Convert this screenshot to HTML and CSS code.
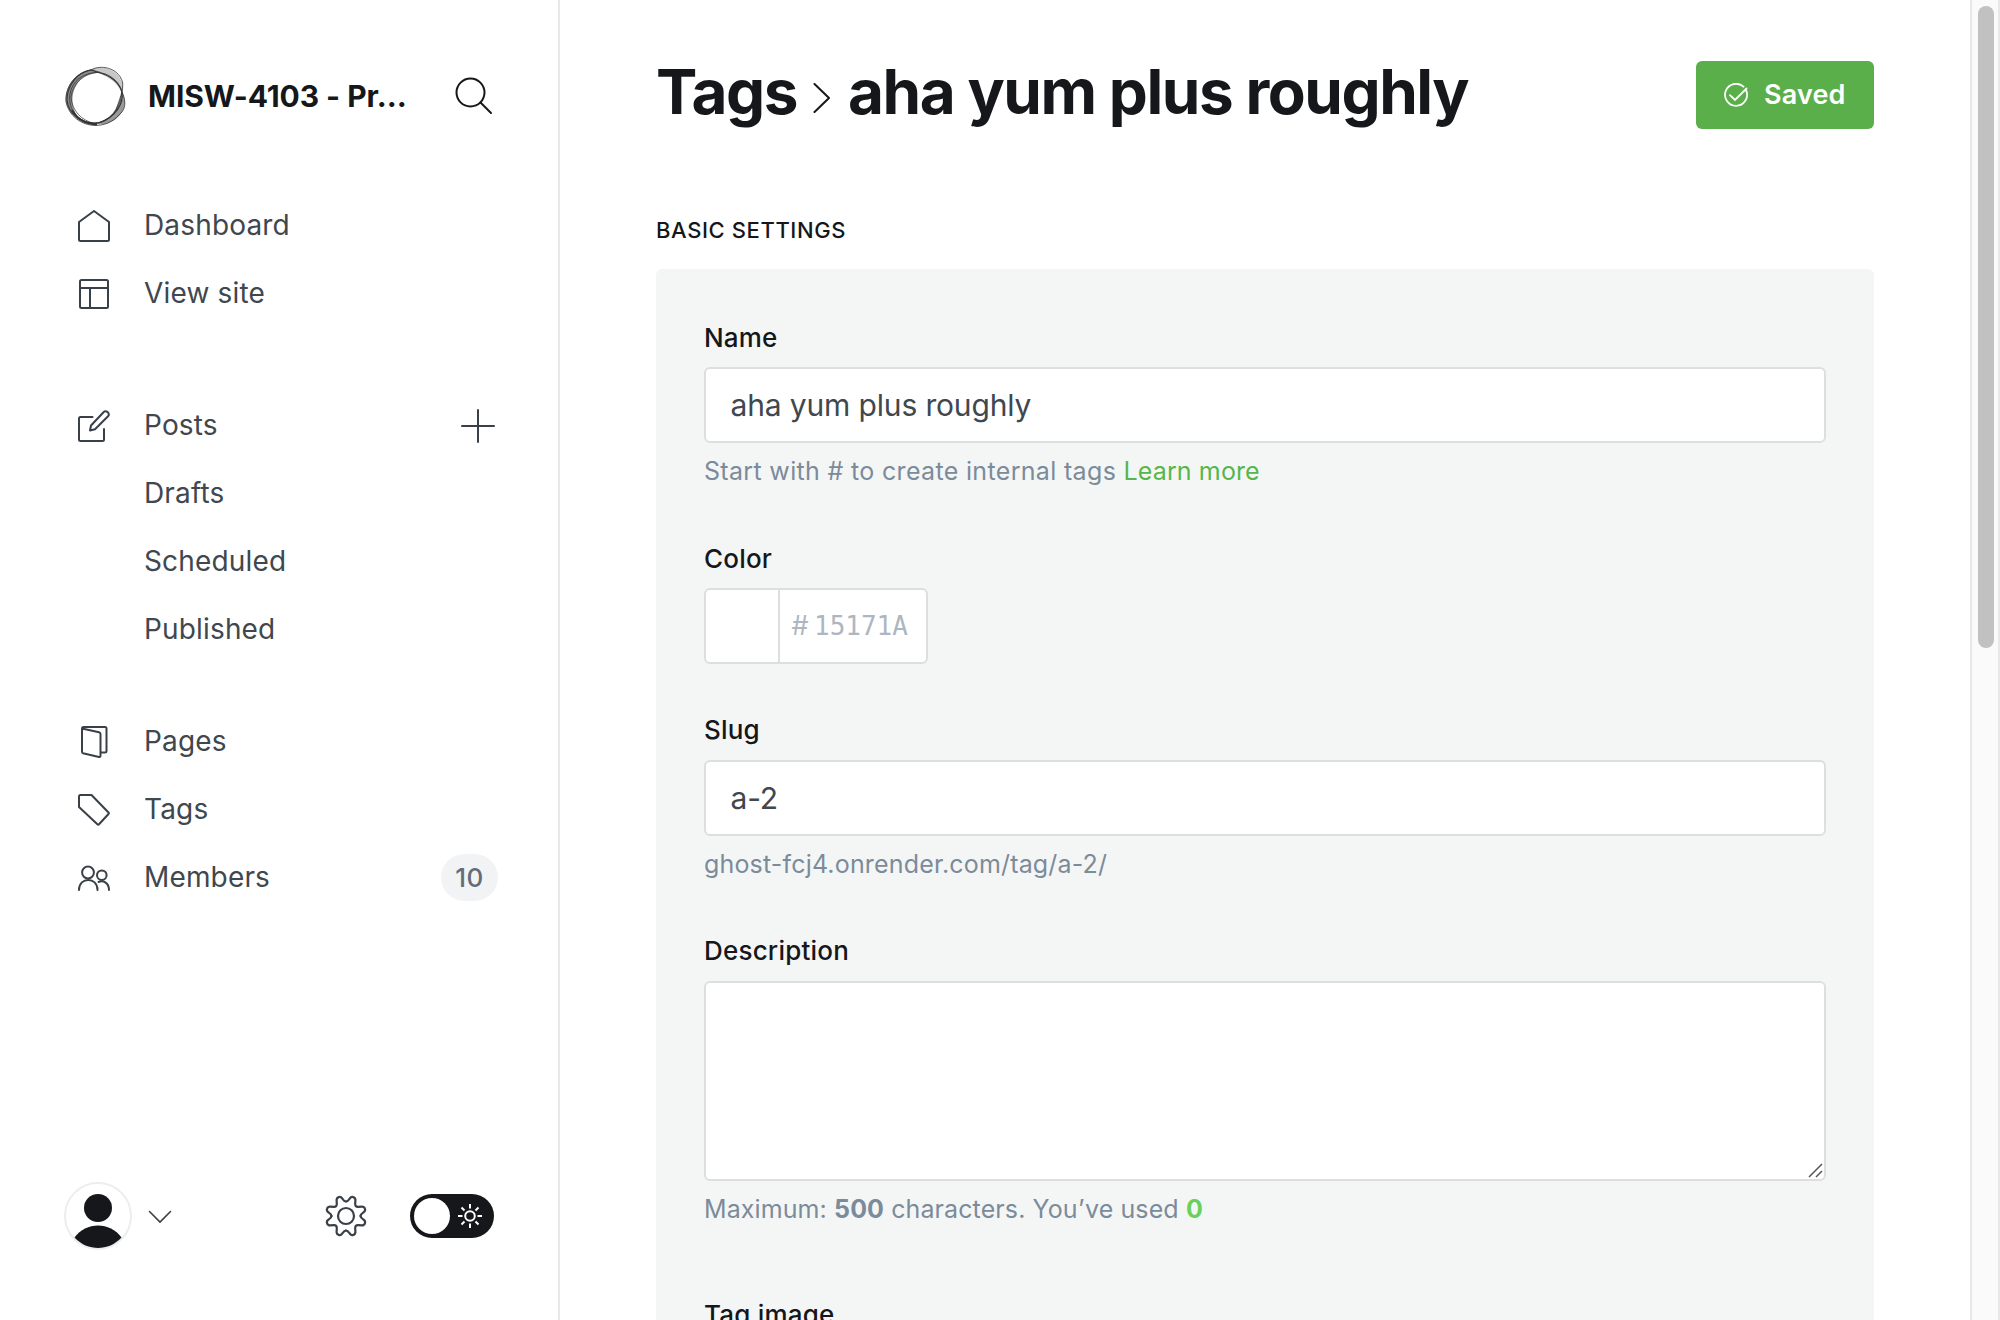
FILE: index.html
```
<!DOCTYPE html>
<html lang="en">
<head>
<meta charset="utf-8">
<title>Tags - aha yum plus roughly</title>
<link rel="stylesheet" href="styles.css">
</head>
<body>
<div class="app">
  <nav class="sidebar">
    <header class="site">
      <svg class="site-logo" viewBox="0 0 62 62" fill="none" stroke="#333">
        <path d="M26 5C34 0 52 2 58 17C60 23 59 26 58 29C54 16 40 9 26 5Z" fill="#c8c8c8" stroke="none"/>
        <path d="M28 4C10 7 0 24 2 37C5 48 12 54 18 57C6 45 7 29 12 21C17 11 25 8 36 7Z" fill="#8a8a8a" stroke="none"/>
        <path d="M58 26C63 36 61 46 54 52C47 59 38 60 31 59C46 55 54 45 58 26Z" fill="#999" stroke="none"/>
        <path d="M27 5C40 9 53 12 58 27C60 38 52 52 35 57.500C20 60 4 50 3 35C3 20 14 7 27 5Z" stroke-width="1.100"/>
        <path d="M27 5C36-.5 54 2 58.500 17C60 24 55 36 52 45C46 56 34 59.500 26 58C10 54 4 41 6 29C8 16 19 8 33 7.500C44 7.500 54 15 58 26" stroke-width=".8"/>
        <path d="M58 27C63 38 61 45 55 50C49 57 40 60.500 31 60.500C17 60 5 51 2 37C1 23 10 8 27 5" stroke-width=".8"/>
        <path d="M36 7C20 8 9 18 7 32C8 46 18 56 31 58.500C46 57 56 45 58 27" stroke-width=".7"/>
        <path d="M8 45C14 55 23 59.500 33 59.300" stroke-width="2"/>
      </svg>
      <span class="site-name">MISW-4103 - Pr…</span>
      <svg class="search" viewBox="0 0 38 38" fill="none" stroke="#15171a" stroke-width="2" stroke-linecap="round"><circle cx="15.5" cy="15.5" r="14"/><path d="M25.5 25.5L36 36"/></svg>
    </header>

    <ul class="nav">
      <li><svg class="icon" viewBox="0 0 32 32"><path d="M16 1L31 12V29.5Q31 31 29.5 31H2.5Q1 31 1 29.500V12Z"/></svg><span>Dashboard</span></li>
      <li><svg class="icon" viewBox="0 0 32 32"><rect x="2" y="2" width="28" height="28" rx="1.500"/><path d="M2 10H30M12 10V30"/></svg><span>View site</span></li>
    </ul>
    <ul class="nav nav-posts">
      <li><svg class="icon" viewBox="0 0 32 32"><path d="M14.500 7H2.500Q1 7 1 8.500V29.500Q1 31 2.500 31H24.500Q26 31 26 29.500V19M12 20.500L13 15.500L25.500 2.200Q27.500.2 29.800 2.200Q31.800 4.500 29.800 6.500L17 19.300Z"/></svg><span>Posts</span>
        <svg class="plus" viewBox="0 0 34 34"><path d="M17 1V33M1 17H33"/></svg></li>
      <li class="sub">Drafts</li>
      <li class="sub">Scheduled</li>
      <li class="sub">Published</li>
    </ul>
    <ul class="nav nav-content">
      <li><svg class="icon" viewBox="0 0 32 32"><path d="M4 2.500L21 6.300Q22.500 6.700 22.500 8V29.500Q22.500 31.300 21 31L5 27.300Q4 27 4 25.500V2.500Q4 1 5.500 1H27Q28.500 1 28.500 2.500V25Q28.500 26.500 27 26.500H23"/></svg><span>Pages</span></li>
      <li><svg class="icon" viewBox="0 0 32 32"><path d="M2.500 1H13.500L30.500 18.500Q31.300 19.300 30.500 20L21 30.300Q20.200 31.200 19.400 30.300L1 13V2.500Q1 1 2.500 1Z"/></svg><span>Tags</span></li>
      <li><svg class="icon" viewBox="0 0 32 32"><circle cx="10" cy="10.500" r="5.900"/><circle cx="23.800" cy="13.200" r="4.800"/><path d="M1 28C1 14.500 19.500 14.500 19.500 28M20.500 20C25.500 18 31 21 31 28"/></svg><span>Members</span><span class="badge">10</span></li>
    </ul>

    <footer class="account">
      <svg class="avatar" viewBox="0 0 68 68"><circle cx="34" cy="34" r="33" fill="#fff" stroke="#eceeed" stroke-width="2"/><circle cx="34" cy="26" r="14" fill="#15171a"/><path d="M10.500 55.500C22 39.500 46 39.500 57.500 55.500C44.500 69.500 23.500 69.500 10.500 55.500Z" fill="#15171a"/></svg>
      <svg class="caret" viewBox="0 0 24 14"><path d="M1.500 1.500L12 12L22.500 1.500"/></svg>
      <svg class="gear" viewBox="-21 -21 42 42">
        <defs><path id="gear-quarter" d="M0-14.500C1.800-14.500 3-16.500 4-17.900Q5.300-19.700 7.300-18.900Q9.500-18.100 9.400-15.700L9.200-12.300Q9-9 12.300-9.200L15.700-9.400Q18.100-9.500 18.900-7.300Q19.700-5.300 17.900-4C16.500-3 14.500-1.800 14.500 0"/></defs>
        <use href="#gear-quarter"/><use href="#gear-quarter" transform="rotate(90)"/><use href="#gear-quarter" transform="rotate(180)"/><use href="#gear-quarter" transform="rotate(270)"/>
        <circle r="8"/>
      </svg>
      <div class="toggle"><span class="knob"></span>
        <svg class="sun" viewBox="-12 -12 24 24"><circle r="4.800"/><path d="M0-12V-7.500M0 12V7.500M-12 0H-7.500M12 0H7.500M-8.500-8.500L-5.500-5.500M8.500 8.500L5.500 5.500M-8.500 8.500L-5.500 5.500M8.500-8.500L5.500-5.500"/></svg>
      </div>
    </footer>
  </nav>

  <main class="main">
    <header class="page-head">
      <h1><span>Tags</span><svg class="crumb" viewBox="0 0 18 30"><path d="M1.500 1L16 15L1.500 29"/></svg><span>aha yum plus roughly</span></h1>
      <button class="saved"><svg viewBox="0 0 24 24"><path d="M19.500 3.700A11 11 0 1 0 22.300 7.800M6 12.200L11 17L22.500 5.500"/></svg>Saved</button>
    </header>
    <h2>BASIC SETTINGS</h2>
    <section class="panel">
      <div class="field name">
        <label>Name</label>
        <div class="input">aha yum plus roughly</div>
        <p class="hint">Start with # to create internal tags <a>Learn more</a></p>
      </div>
      <div class="field color">
        <label>Color</label>
        <div class="input color-input"><span class="swatch"></span><span class="hex"><span class="hash">#</span><span class="code">15171A</span></span></div>
      </div>
      <div class="field slug">
        <label>Slug</label>
        <div class="input">a-2</div>
        <p class="hint url">ghost-fcj4.onrender.com/tag/a-2/</p>
      </div>
      <div class="field description">
        <label>Description</label>
        <div class="input area"><svg class="grip" viewBox="0 0 15 15"><path d="M1 14L14 1M8 14L14 8"/></svg></div>
        <p class="hint limit">Maximum: <b>500</b> characters. You’ve used <b class="count">0</b></p>
      </div>
      <div class="field"><label>Tag image</label></div>
    </section>
  </main>
  <div class="scrollbar"><div class="thumb"></div></div>
</div>
</body>
</html>
```
FILE: styles.css
```
* { box-sizing: border-box; margin: 0; padding: 0; }
body { background: #fff; font-family: Inter, "Liberation Sans", sans-serif; color: #15171a; overflow: hidden; }
svg { display: block; flex: none; fill: none; }
.app { display: flex; height: 1320px; overflow: hidden; }

.sidebar { width: 560px; flex: none; border-right: 2px solid #e6e9eb; padding: 64px 60px 70px 64px; display: flex; flex-direction: column; }
.site { display: flex; align-items: center; height: 64px; }
.site-logo { width: 62px; height: 62px; margin-top: -1px; }
.site-name { font-size: 30px; font-weight: 700; line-height: 64px; margin-left: 22px; flex: 1; white-space: nowrap; letter-spacing: -.06px; }
.search { width: 38px; height: 38px; margin-right: 5px; }

.nav { list-style: none; margin-top: 63px; }
.nav-posts { margin-top: 64px; }
.nav-content { margin-top: 44px; }
.nav li { display: flex; align-items: center; height: 68px; padding-left: 14px; font-size: 28px; letter-spacing: .16px; color: #40474e; }
.nav .sub { padding-left: 80px; }
.icon { width: 32px; height: 32px; margin-right: 34px; position: relative; top: 1px; stroke: #394047; stroke-width: 2; stroke-linejoin: round; stroke-linecap: round; }
.plus { width: 34px; height: 34px; margin-left: auto; margin-right: 3px; position: relative; top: 1px; stroke: #394047; stroke-width: 2; stroke-linecap: round; }
.badge { margin-left: auto; width: 57px; height: 47px; line-height: 47px; border-radius: 24px; text-align: center; background: #f1f3f4; color: #626d79; font-size: 26px; font-weight: 500; letter-spacing: .4px; }

.account { margin-top: auto; display: flex; align-items: center; height: 68px; }
.avatar { width: 68px; height: 68px; }
.caret { width: 24px; height: 14px; margin-left: 16px; position: relative; top: 1px; stroke: #394047; stroke-width: 1.6; stroke-linecap: round; }
.gear { width: 42px; height: 42px; margin-left: 153px; stroke: #394047; stroke-width: 2.2; stroke-linecap: round; }
.toggle { width: 84px; height: 44px; border-radius: 22px; background: #15171a; margin-left: 43px; display: flex; align-items: center; justify-content: space-between; padding: 0 12px 0 4px; }
.knob { width: 36px; height: 36px; border-radius: 50%; background: #fff; }
.sun { width: 24px; height: 24px; stroke: #fff; stroke-width: 2; }

.main { flex: 1; padding: 61px 96px 0; }
.page-head { display: flex; justify-content: space-between; align-items: flex-start; height: 68px; }
h1 { display: flex; align-items: center; font-size: 62px; font-weight: 700; line-height: 62px; letter-spacing: -1.45px; white-space: nowrap; }
.crumb { width: 18px; height: 30px; margin: 12px 17px 0 16px; stroke: #15171a; stroke-width: 2; stroke-linecap: round; stroke-linejoin: round; }
.saved { display: flex; align-items: center; gap: 16px; width: 178px; height: 68px; padding: 0 0 2px 28px; border: 0; border-radius: 6px; background: #5aaf4b; color: #fff; font: 600 27px Inter, sans-serif; letter-spacing: .14px; }
.saved svg { width: 24px; height: 24px; position: relative; top: 1px; stroke: #fff; stroke-width: 1.8; stroke-linecap: round; }
h2 { font-size: 22px; font-weight: 500; line-height: 30px; letter-spacing: .6px; margin-top: 86px; }

.panel { margin-top: 24px; height: 1100px; background: #f4f6f6; border-radius: 6px; padding: 48px; }
.field label { display: block; font-size: 26px; font-weight: 500; line-height: 41px; letter-spacing: .2px; }
.input { height: 76px; margin-top: 9px; border: 2px solid #dddfdf; border-radius: 6px; background: #fff; padding: 0 24px 0 24.5px; font-size: 30px; line-height: 72px; letter-spacing: -.15px; color: #40474e; }
.hint { margin-top: 12px; font-size: 25px; line-height: 32px; letter-spacing: .33px; color: #7c8b9a; white-space: nowrap; }
.hint a { color: #57b64a; letter-spacing: .12px; }
.hint .count { color: #6ad05a; }
.limit { letter-spacing: .1px; }
.url { letter-spacing: .17px; }
.color { margin-top: 51px; }
.slug { margin-top: 45px; }
.slug .input { margin-top: 10px; }
.description { margin-top: 50px; }
.description + .field { margin-top: 69px; }
.area { display: flex; align-items: flex-end; justify-content: flex-end; height: 200px; margin-top: 10px; padding: 0 1px 1px 0; }
.grip { width: 15px; height: 15px; stroke: #555; stroke-width: 1.5; }
.color-input { display: flex; width: 224px; padding: 0; }
.swatch { width: 74px; border-right: 2px solid #dddfdf; }
.hex { display: flex; align-items: center; padding-left: 12px; gap: 6px; color: #aeb6c1; line-height: 74px; letter-spacing: 0; }
.hash { font-size: 27px; width: 16px; display: flex; justify-content: center; }
.code { font-family: "DejaVu Sans Mono", monospace; font-size: 26px; font-weight: 400; }

.scrollbar { width: 30px; flex: none; background: #fafafa; border: solid #e8e8e8; border-width: 0 2px; padding: 6px 4px 0 6px; }
.thumb { width: 16px; height: 642px; border-radius: 8px; background: #c1c1c1; }
```
